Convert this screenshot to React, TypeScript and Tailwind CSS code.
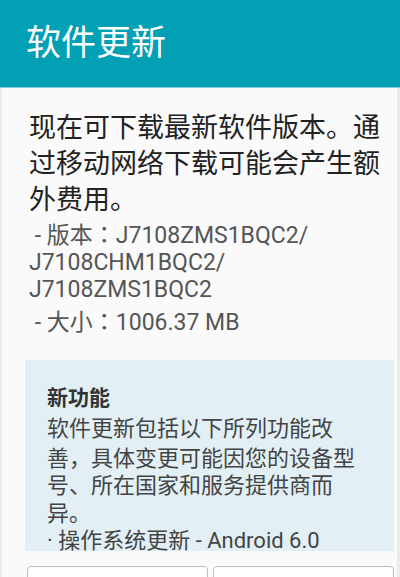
import React from "react";

export default function App() {
  const font = { fontFamily: "Roboto, 'Noto Sans CJK SC', sans-serif" };
  const jp = { fontFamily: "'Noto Sans CJK JP', sans-serif" };
  const colon = <span style={jp}>：</span>;
  return (
    <div className="w-[400px] h-[577px] overflow-hidden bg-[#ececec] flex flex-col" style={font}>
      <div className="h-[88px] shrink-0 bg-[#02a0b5] flex items-center pl-[26px] border-b border-[#7fd0da]">
        <span className="text-white text-[35px] leading-none">软件更新</span>
      </div>
      <div className="flex-1 mx-[2px] mr-[3px] bg-[#fafafa] flex flex-col overflow-hidden">
        <div className="pl-[27px] pt-[22px] text-[27px] leading-[36px] text-[#222] whitespace-nowrap">
          现在可下载最新软件版本。通
          <br />
          过移动网络下载可能会产生额
          <br />
          外费用。
        </div>
        <div className="pl-[27px] mt-[2px] text-[23px] leading-[27px] text-[#555] whitespace-nowrap">
          <div>&nbsp;- 版本{colon}J7108ZMS1BQC2/</div>
          <div>J7108CHM1BQC2/</div>
          <div>J7108ZMS1BQC2</div>
          <div className="mt-[4px]">&nbsp;- 大小{colon}1006.37 MB</div>
        </div>
        <div className="ml-[23px] mr-[3px] mt-[24px] h-[191px] shrink-0 bg-[#e2f0f6] overflow-hidden pl-[22px] pt-[24px]">
          <div className="text-[21px] leading-[28px] font-bold text-[#333]">新功能</div>
          <div className="mt-[3px] text-[22px] leading-[27.5px] text-[#444] whitespace-nowrap">
            软件更新包括以下所列功能改
            <br />
            善<span style={jp}>，</span>具体变更可能因您的设备型
            <br />
            号、所在国家和服务提供商而
            <br />
            异。
            <br />· 操作系统更新 - Android 6.0
          </div>
        </div>
        <div className="flex gap-[5px] ml-[25px] mr-[3px] mt-[15px]">
          <div className="flex-1 h-[40px] bg-white border border-[#bdbdbd] rounded-t-[4px]" />
          <div className="flex-1 h-[40px] bg-white border border-[#bdbdbd] rounded-t-[4px]" />
        </div>
      </div>
    </div>
  );
}
